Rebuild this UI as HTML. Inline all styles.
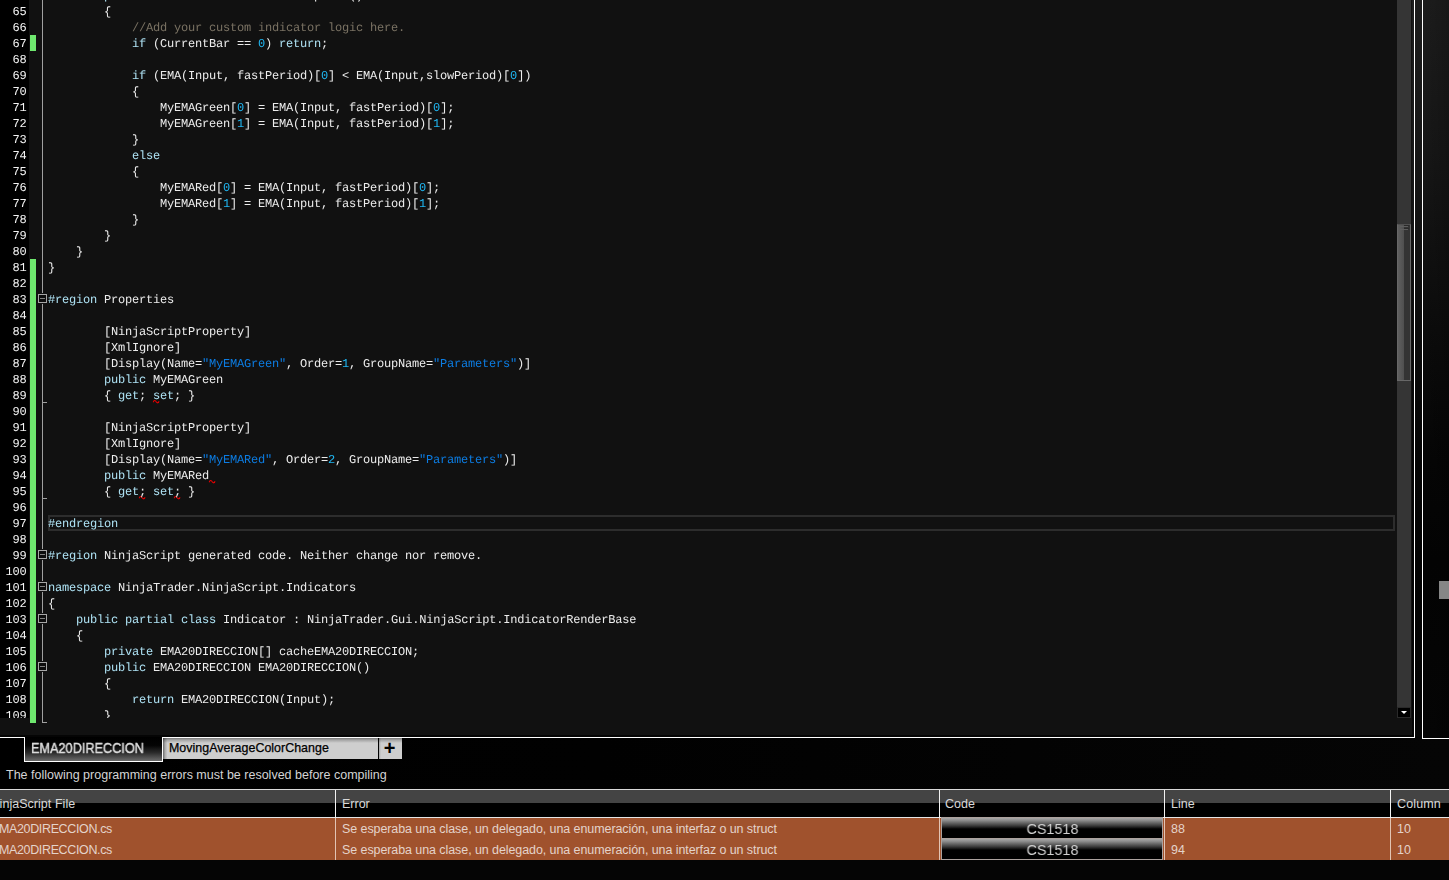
<!DOCTYPE html>
<html lang="en">
<head>
<meta charset="utf-8">
<title>NinjaScript Editor - EMA20DIRECCION</title>
<style>
html,body{margin:0;padding:0;background:#050505;}
body{width:1449px;height:880px;position:relative;overflow:hidden;font-family:"Liberation Sans",sans-serif;}

#editor{position:absolute;left:0;top:0;width:1412px;height:735px;background:#111;overflow:hidden;}
#gutter{position:absolute;left:0;top:0;width:29px;height:718px;background:#000;}
#textclip{position:absolute;left:0;top:0;width:1397px;height:718px;overflow:hidden;will-change:transform;z-index:5;}
.ln,.cl{position:absolute;height:16px;line-height:16px;font-family:"Liberation Mono","DejaVu Sans Mono",monospace;font-size:12px;letter-spacing:-0.2px;white-space:pre;text-rendering:geometricPrecision;}
.ln{left:0;width:26.5px;text-align:right;color:#f4f4f4;}
.cl{left:48px;color:#ececec;}
.k{color:#aee2f4;}
.n{color:#20b8f4;}
.s{color:#0c7ce2;}
.c{color:#7a7263;}
.green{position:absolute;left:30px;width:6px;background:#6fe86f;}
.foldline{position:absolute;left:42px;top:0;width:1px;height:723px;background:#a0a0a0;}
.tick{position:absolute;left:42px;width:5px;height:1px;background:#a0a0a0;}
.fold{position:absolute;left:38px;width:7px;height:7px;border:1px solid #a6a6a6;background:#0d0d0d;box-shadow:0 0 0 1px #111;}
.fold:after{content:"";position:absolute;left:1px;top:3px;width:5px;height:1px;background:#808080;}
#curline{position:absolute;left:48px;top:515px;width:1343px;height:12px;border:2px solid #2d2d2d;}
#vtrack{position:absolute;left:1397px;top:0;width:14px;height:718px;background:#353535;}
#vthumb{position:absolute;left:0;top:224px;width:12px;height:155px;border:1px solid #686868;border-top-color:#505050;background:linear-gradient(to right,#606060 0%,#505050 48%,#343434 52%,#343434 100%);}
.grip{position:absolute;left:2px;width:8px;height:1px;background:#5e5e5e;}
.gripd{position:absolute;left:6px;width:5px;height:1px;background:#2a2a2a;}
#vdown{position:absolute;left:0;top:707px;width:12px;height:9px;border:1px solid #2a2a2a;background:#000;}
#vdown:after{content:"";position:absolute;left:2.5px;top:3px;border-left:3.5px solid transparent;border-right:3.5px solid transparent;border-top:3.5px solid #fff;}

.sq{position:absolute;width:7px;height:4px;overflow:visible;}
#win{position:absolute;left:0;top:0;width:1449px;height:880px;overflow:hidden;background:#050505;}
#edborder-r{position:absolute;left:1414px;top:0;width:1px;height:738px;background:#fff;}
#edborder-b1{position:absolute;left:0;top:737px;width:25px;height:1px;background:#fff;}
#edborder-b2{position:absolute;left:162px;top:737px;width:1253px;height:1px;background:#fff;}
#strip{position:absolute;left:0;top:738px;width:1449px;height:51px;background:linear-gradient(to right,#000 0,#010101 600px,#050505 1449px);}
#gap{position:absolute;left:1412px;top:0;width:37px;height:739px;background:linear-gradient(to right,rgba(0,0,0,0) 0,rgba(0,0,0,0) 10px,rgba(0,0,0,.18) 37px),linear-gradient(to bottom,#1d1d1d 0px,#171717 150px,#0c0c0c 330px,#050505 460px,#030303 560px,#050505 739px);}
#rp-l{position:absolute;left:1422px;top:0;width:1px;height:739px;background:#fff;}
#rp-b{position:absolute;left:1422px;top:738px;width:27px;height:1px;background:#fff;}
#rp-sq{position:absolute;left:1439px;top:581px;width:10px;height:18px;background:#868686;}
#tabA{position:absolute;left:24px;top:737px;width:137px;height:24px;border:1px solid #fff;border-top:none;background:linear-gradient(to bottom,#000 0%,#040404 35%,#2a2a2a 65%,#6c6c6c 100%);}
#tabA span{position:absolute;left:6px;top:3px;font-size:14px;line-height:16px;color:#dcdcdc;white-space:pre;text-shadow:0 0 1px #999;-webkit-text-stroke:0.3px #dcdcdc;transform:scaleX(0.907);transform-origin:0 0;will-change:transform;z-index:5;}
#tabB{position:absolute;left:163px;top:738px;width:215px;height:21px;background:linear-gradient(to right,rgba(0,0,0,.5) 0,rgba(0,0,0,.18) 2px,rgba(0,0,0,0) 4.5px),linear-gradient(to bottom,rgba(0,0,0,.42) 0,rgba(0,0,0,.2) 2px,rgba(0,0,0,0) 5px),#cecece;}
#tabB span{position:absolute;left:6px;top:2px;font-size:12.4px;letter-spacing:0.04px;line-height:16px;color:#000;white-space:pre;-webkit-text-stroke:0.25px #000;}
#tabP{position:absolute;left:379px;top:738px;width:23px;height:21px;background:linear-gradient(to right,rgba(0,0,0,.2) 0,rgba(0,0,0,0) 2px),linear-gradient(to bottom,rgba(0,0,0,.42) 0,rgba(0,0,0,.2) 2px,rgba(0,0,0,0) 5px),#cecece;}
#tabP span{position:absolute;left:-0.5px;top:0;width:22px;text-align:center;font-size:20px;line-height:20px;font-weight:bold;color:#000;}
#msg{position:absolute;left:6px;top:767px;font-size:12.5px;line-height:16px;color:#d4d4d4;white-space:pre;}
#tbl{position:absolute;left:0;top:789px;width:1449px;height:71px;overflow:hidden;}
#thead{position:absolute;left:0;top:0;width:1449px;height:29px;background:linear-gradient(to bottom,#d9d9d9 0,#d9d9d9 1px,#444 1px,#444 14px,#000 14px,#000 28px,#e6e6e6 28px,#e6e6e6 29px);}
.th{position:absolute;top:7px;font-size:12.5px;line-height:16px;color:#d8d8d8;white-space:pre;}
.vs{position:absolute;top:1px;width:1px;height:28px;background:#f2f2f2;}
.row{position:absolute;left:0;width:1449px;height:21px;background:#a0522d;}
.td{position:absolute;top:3px;font-size:12.5px;line-height:16px;color:#e4d3ca;white-space:pre;}
.rs{position:absolute;top:0;width:1px;height:21px;background:#e2c4b4;}
.btn{position:absolute;left:941px;top:-1px;width:220px;height:20px;border:1px solid #aca29e;border-bottom:none;background:linear-gradient(to bottom,#a8a8a8 0%,#8c8c8c 12%,#3c3c3c 38%,#000 55%,#000 100%);text-align:center;font-size:15.2px;line-height:20px;color:#d2d2d2;}
.btn.last{border-bottom:1px solid #aca29e;}
.btn span{position:relative;top:1px;display:inline-block;transform:scaleX(0.945);will-change:transform;z-index:5;}
</style>
</head>
<body>
<div id="win">
<div id="editor">
  <div id="gutter"></div>
  <div class="green" style="top:35px;height:16px"></div>
  <div class="green" style="top:259px;height:464px"></div>
  <div class="foldline"></div>
  <div class="tick" style="top:402px"></div>
  <div class="tick" style="top:498px"></div>
  <div class="tick" style="top:722px"></div>
  <div class="fold" style="top:294px"></div>
  <div class="fold" style="top:550px"></div>
  <div class="fold" style="top:582px"></div>
  <div class="fold" style="top:614px"></div>
  <div class="fold" style="top:662px"></div>
  <div id="curline"></div>
  <div id="textclip">
<div class="ln" style="top:-12px">64</div>
<div class="ln" style="top:4px">65</div>
<div class="ln" style="top:20px">66</div>
<div class="ln" style="top:36px">67</div>
<div class="ln" style="top:52px">68</div>
<div class="ln" style="top:68px">69</div>
<div class="ln" style="top:84px">70</div>
<div class="ln" style="top:100px">71</div>
<div class="ln" style="top:116px">72</div>
<div class="ln" style="top:132px">73</div>
<div class="ln" style="top:148px">74</div>
<div class="ln" style="top:164px">75</div>
<div class="ln" style="top:180px">76</div>
<div class="ln" style="top:196px">77</div>
<div class="ln" style="top:212px">78</div>
<div class="ln" style="top:228px">79</div>
<div class="ln" style="top:244px">80</div>
<div class="ln" style="top:260px">81</div>
<div class="ln" style="top:276px">82</div>
<div class="ln" style="top:292px">83</div>
<div class="ln" style="top:308px">84</div>
<div class="ln" style="top:324px">85</div>
<div class="ln" style="top:340px">86</div>
<div class="ln" style="top:356px">87</div>
<div class="ln" style="top:372px">88</div>
<div class="ln" style="top:388px">89</div>
<div class="ln" style="top:404px">90</div>
<div class="ln" style="top:420px">91</div>
<div class="ln" style="top:436px">92</div>
<div class="ln" style="top:452px">93</div>
<div class="ln" style="top:468px">94</div>
<div class="ln" style="top:484px">95</div>
<div class="ln" style="top:500px">96</div>
<div class="ln" style="top:516px">97</div>
<div class="ln" style="top:532px">98</div>
<div class="ln" style="top:548px">99</div>
<div class="ln" style="top:564px">100</div>
<div class="ln" style="top:580px">101</div>
<div class="ln" style="top:596px">102</div>
<div class="ln" style="top:612px">103</div>
<div class="ln" style="top:628px">104</div>
<div class="ln" style="top:644px">105</div>
<div class="ln" style="top:660px">106</div>
<div class="ln" style="top:676px">107</div>
<div class="ln" style="top:692px">108</div>
<div class="ln" style="top:708px">109</div>
<div class="cl" style="top:-12px">        <span class="k">protected</span> <span class="k">override</span> <span class="k">void</span> OnBarUpdate()</div>
<div class="cl" style="top:4px">        {</div>
<div class="cl" style="top:20px">            <span class="c">//Add your custom indicator logic here.</span></div>
<div class="cl" style="top:36px">            <span class="k">if</span> (CurrentBar == <span class="n">0</span>) <span class="k">return</span>;</div>
<div class="cl" style="top:68px">            <span class="k">if</span> (EMA(Input, fastPeriod)[<span class="n">0</span>] &lt; EMA(Input,slowPeriod)[<span class="n">0</span>])</div>
<div class="cl" style="top:84px">            {</div>
<div class="cl" style="top:100px">                MyEMAGreen[<span class="n">0</span>] = EMA(Input, fastPeriod)[<span class="n">0</span>];</div>
<div class="cl" style="top:116px">                MyEMAGreen[<span class="n">1</span>] = EMA(Input, fastPeriod)[<span class="n">1</span>];</div>
<div class="cl" style="top:132px">            }</div>
<div class="cl" style="top:148px">            <span class="k">else</span></div>
<div class="cl" style="top:164px">            {</div>
<div class="cl" style="top:180px">                MyEMARed[<span class="n">0</span>] = EMA(Input, fastPeriod)[<span class="n">0</span>];</div>
<div class="cl" style="top:196px">                MyEMARed[<span class="n">1</span>] = EMA(Input, fastPeriod)[<span class="n">1</span>];</div>
<div class="cl" style="top:212px">            }</div>
<div class="cl" style="top:228px">        }</div>
<div class="cl" style="top:244px">    }</div>
<div class="cl" style="top:260px">}</div>
<div class="cl" style="top:292px"><span class="k">#region</span> Properties</div>
<div class="cl" style="top:324px">        [NinjaScriptProperty]</div>
<div class="cl" style="top:340px">        [XmlIgnore]</div>
<div class="cl" style="top:356px">        [Display(Name=<span class="s">&quot;MyEMAGreen&quot;</span>, Order=<span class="n">1</span>, GroupName=<span class="s">&quot;Parameters&quot;</span>)]</div>
<div class="cl" style="top:372px">        <span class="k">public</span> MyEMAGreen</div>
<div class="cl" style="top:388px">        { <span class="k">get</span>; <span class="k">set</span>; }</div>
<div class="cl" style="top:420px">        [NinjaScriptProperty]</div>
<div class="cl" style="top:436px">        [XmlIgnore]</div>
<div class="cl" style="top:452px">        [Display(Name=<span class="s">&quot;MyEMARed&quot;</span>, Order=<span class="n">2</span>, GroupName=<span class="s">&quot;Parameters&quot;</span>)]</div>
<div class="cl" style="top:468px">        <span class="k">public</span> MyEMARed</div>
<div class="cl" style="top:484px">        { <span class="k">get</span>; <span class="k">set</span>; }</div>
<div class="cl" style="top:516px"><span class="k">#endregion</span></div>
<div class="cl" style="top:548px"><span class="k">#region</span> NinjaScript generated code. Neither change nor remove.</div>
<div class="cl" style="top:580px"><span class="k">namespace</span> NinjaTrader.NinjaScript.Indicators</div>
<div class="cl" style="top:596px">{</div>
<div class="cl" style="top:612px">    <span class="k">public</span> <span class="k">partial</span> <span class="k">class</span> Indicator : NinjaTrader.Gui.NinjaScript.IndicatorRenderBase</div>
<div class="cl" style="top:628px">    {</div>
<div class="cl" style="top:644px">        <span class="k">private</span> EMA20DIRECCION[] cacheEMA20DIRECCION;</div>
<div class="cl" style="top:660px">        <span class="k">public</span> EMA20DIRECCION EMA20DIRECCION()</div>
<div class="cl" style="top:676px">        {</div>
<div class="cl" style="top:692px">            <span class="k">return</span> EMA20DIRECCION(Input);</div>
<div class="cl" style="top:708px">        }</div>

  </div>
  <svg class="sq" style="left:153px;top:400px" viewBox="0 0 7 4"><path d="M0.4 1.8 Q0.8 0.3 1.7 0.5 Q2.6 0.7 3.2 1.7 Q3.9 2.8 4.8 2.8 Q5.6 2.7 5.8 1.6" fill="none" stroke="#e60000" stroke-width="1.15" stroke-linecap="round"/></svg>
  <svg class="sq" style="left:209px;top:480px" viewBox="0 0 7 4"><path d="M0.4 1.8 Q0.8 0.3 1.7 0.5 Q2.6 0.7 3.2 1.7 Q3.9 2.8 4.8 2.8 Q5.6 2.7 5.8 1.6" fill="none" stroke="#e60000" stroke-width="1.15" stroke-linecap="round"/></svg>
  <svg class="sq" style="left:139px;top:496px" viewBox="0 0 7 4"><path d="M0.4 1.8 Q0.8 0.3 1.7 0.5 Q2.6 0.7 3.2 1.7 Q3.9 2.8 4.8 2.8 Q5.6 2.7 5.8 1.6" fill="none" stroke="#e60000" stroke-width="1.15" stroke-linecap="round"/></svg>
  <svg class="sq" style="left:174px;top:496px" viewBox="0 0 7 4"><path d="M0.4 1.8 Q0.8 0.3 1.7 0.5 Q2.6 0.7 3.2 1.7 Q3.9 2.8 4.8 2.8 Q5.6 2.7 5.8 1.6" fill="none" stroke="#e60000" stroke-width="1.15" stroke-linecap="round"/></svg>
  <div id="vtrack"><div id="vthumb"><div class="gripd" style="top:0px"></div><div class="grip" style="top:1px"></div><div class="gripd" style="top:3px"></div><div class="grip" style="top:4px"></div></div><div id="vdown"></div></div>
</div>
<div id="strip"></div>
<div id="gap"></div>
<div id="edborder-r"></div>
<div id="edborder-b1"></div>
<div id="edborder-b2"></div>
<div id="rp-l"></div>
<div id="rp-b"></div>
<div id="rp-sq"></div>
<div id="tabA"><span>EMA20DIRECCION</span></div>
<div id="tabB"><span>MovingAverageColorChange</span></div>
<div id="tabP"><span>+</span></div>
<div id="msg">The following programming errors must be resolved before compiling</div>
<div id="tbl">
  <div id="thead">
    <div class="th" style="left:-9.5px;letter-spacing:0.04px">NinjaScript File</div>
    <div class="th" style="left:342px">Error</div>
    <div class="th" style="left:945px">Code</div>
    <div class="th" style="left:1171px">Line</div>
    <div class="th" style="left:1397px;letter-spacing:0.15px">Column</div>
    <div class="vs" style="left:335px"></div>
    <div class="vs" style="left:939px"></div>
    <div class="vs" style="left:1164px"></div>
    <div class="vs" style="left:1390px"></div>
  </div>
  <div class="row" style="top:29px">
    <div class="td" style="left:-9px;letter-spacing:-0.36px">EMA20DIRECCION.cs</div>
    <div class="td" style="left:342px;letter-spacing:-0.083px">Se esperaba una clase, un delegado, una enumeración, una interfaz o un struct</div>
    <div class="btn"><span>CS1518</span></div>
    <div class="td" style="left:1171px">88</div>
    <div class="td" style="left:1397px">10</div>
    <div class="rs" style="left:335px"></div>
    <div class="rs" style="left:939px"></div>
    <div class="rs" style="left:1164px"></div>
    <div class="rs" style="left:1390px"></div>
  </div>
  <div class="row" style="top:50px">
    <div class="td" style="left:-9px;letter-spacing:-0.36px">EMA20DIRECCION.cs</div>
    <div class="td" style="left:342px;letter-spacing:-0.083px">Se esperaba una clase, un delegado, una enumeración, una interfaz o un struct</div>
    <div class="btn last"><span>CS1518</span></div>
    <div class="td" style="left:1171px">94</div>
    <div class="td" style="left:1397px">10</div>
    <div class="rs" style="left:335px"></div>
    <div class="rs" style="left:939px"></div>
    <div class="rs" style="left:1164px"></div>
    <div class="rs" style="left:1390px"></div>
  </div>
</div>
</div>
</body>
</html>
